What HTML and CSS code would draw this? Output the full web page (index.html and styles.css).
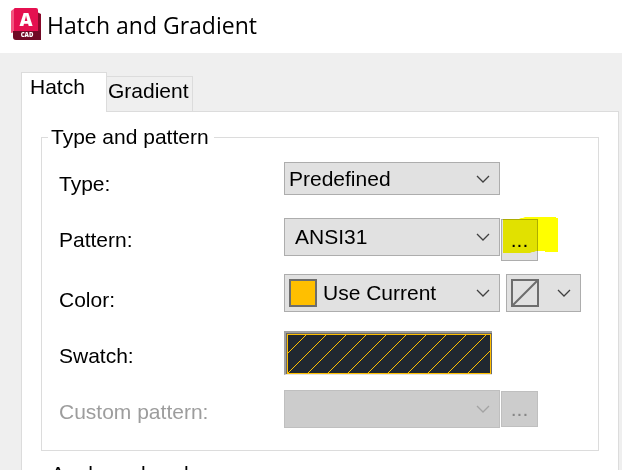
FILE: index.html
```html
<!DOCTYPE html>
<html lang="en">
<head>
    <meta charset="UTF-8" />
    <meta name="viewport" content="width=device-width, initial-scale=1.0" />
    <title>Hatch and Gradient</title>
    <link rel="stylesheet" href="styles.css">
</head>
<body>
    <header class="title-bar">
        <svg class="app-icon" viewBox="0 0 30 33" aria-hidden="true">
            <path fill="#f2557f" d="M0 3 4 0v24l-4 1z" />
            <path fill="#8a0a2c" d="M26 4l4 2v26H6z" />
            <path fill="#e51050" d="M4 0h21q2 0 2 2v21H3V1z" />
            <path fill="#700a26" d="M2 23h25l3-1v10H5q-3 0-3-3z" />
            <text class="icon-letter" x="15" y="18" text-anchor="middle">A</text>
            <text class="icon-name" x="16" y="29" text-anchor="middle">CAD</text>
        </svg>
        <h1>Hatch and Gradient</h1>
    </header>

    <main>
        <div class="tabs" role="tablist">
            <button class="tab active" role="tab" aria-selected="true">Hatch</button>
            <button class="tab" role="tab" aria-selected="false">Gradient</button>
        </div>

        <div class="panel" role="tabpanel">
            <fieldset>
                <legend>Type and pattern</legend>
                <div class="form-grid">
                    <label for="type">Type:</label>
                    <div class="controls">
                        <div class="combo combo-short">
                            <select id="type"><option>Predefined</option></select>
                            <svg class="chevron" viewBox="0 0 14 8" aria-hidden="true"><path d="M1 1l6 6 6-6" /></svg>
                        </div>
                    </div>

                    <label for="pattern">Pattern:</label>
                    <div class="controls">
                        <div class="combo combo-indent">
                            <select id="pattern"><option>ANSI31</option></select>
                            <svg class="chevron" viewBox="0 0 14 8" aria-hidden="true"><path d="M1 1l6 6 6-6" /></svg>
                        </div>
                        <div class="highlighted">
                            <button class="browse browse-tall" aria-label="Browse patterns">...</button>
                            <svg class="marker" viewBox="0 0 55 37" aria-hidden="true">
                                <path fill="#ffff00" d="M0 3h16l2-1h2l2-1h31v1h2v34H42v-1h-9l-2 1h-2l-2 1H0z" />
                            </svg>
                        </div>
                    </div>

                    <label class="label-low" for="color">Color:</label>
                    <div class="controls">
                        <div class="combo combo-color">
                            <span class="chip"></span>
                            <select id="color"><option>Use Current</option></select>
                            <svg class="chevron" viewBox="0 0 14 8" aria-hidden="true"><path d="M1 1l6 6 6-6" /></svg>
                        </div>
                        <div class="combo combo-background">
                            <svg class="no-color" viewBox="0 0 28 28" aria-hidden="true"><path d="M1 1h26v26H1zM1 27 27 1" /></svg>
                            <select aria-label="Background color"><option></option></select>
                            <svg class="chevron" viewBox="0 0 14 8" aria-hidden="true"><path d="M1 1l6 6 6-6" /></svg>
                        </div>
                    </div>

                    <label class="label-low" for="swatch">Swatch:</label>
                    <div class="controls">
                        <button class="swatch" id="swatch">
                            <svg viewBox="0 0 202 38" aria-hidden="true">
                                <path d="M-1 19 19-1M-1 39 39-1M19 39 59-1M39 39 79-1M59 39 99-1M79 39 119-1M99 39 139-1M119 39 159-1M139 39 179-1M159 39 199-1M179 39 219-1" />
                            </svg>
                        </button>
                    </div>

                    <label class="disabled" for="custom">Custom pattern:</label>
                    <div class="controls">
                        <div class="combo">
                            <select id="custom" disabled><option></option></select>
                            <svg class="chevron disabled" viewBox="0 0 14 8" aria-hidden="true"><path d="M1 1l6 6 6-6" /></svg>
                        </div>
                        <button class="browse" aria-label="Browse custom patterns" disabled>...</button>
                    </div>
                </div>
            </fieldset>

            <fieldset>
                <legend>Angle and scale</legend>
            </fieldset>
        </div>
    </main>
</body>
</html>
```
FILE: styles.css
```css
:root {
    --face: #efefef;
    --line: #dcdcdc;
    --control: #e1e1e1;
    --control-border: #adadad;
    --disabled: #cccccc;
    --disabled-border: #bfbfbf;
    --disabled-text: #9d9d9d;
    --accent: #ffbf00;
}

* {
    box-sizing: border-box;
}

body {
    display: flex;
    flex-direction: column;
    height: 100vh;
    margin: 0;
    overflow: hidden;
    background-color: var(--face);
    color: #000;
    font-family: "Liberation Sans", Arial, sans-serif;
    font-size: 21px;
    line-height: 24px;
}

button,
select {
    margin: 0;
    font: inherit;
    color: inherit;
    border: 1px solid var(--control-border);
    border-radius: 0;
    background-color: var(--control);
}

.title-bar {
    display: flex;
    flex-shrink: 0;
    align-items: center;
    gap: 6px;
    height: 53px;
    padding: 0 11px 4px;
    background-color: #fff;
}

.app-icon {
    width: 30px;
    height: 33px;
}

.icon-letter,
.icon-name {
    fill: #fff;
    font-family: "Open Sans", sans-serif;
    font-weight: 800;
}

.icon-letter {
    font-size: 18px;
}

.icon-name {
    font-size: 6px;
}

h1 {
    margin: 0;
    font-family: "Segoe UI", "Open Sans", sans-serif;
    font-size: 23px;
    font-weight: 400;
}

main {
    padding: 19px 3px 0 21px;
}

.tabs {
    display: flex;
    align-items: flex-end;
}

.tab {
    height: 35px;
    padding: 2px 3px 8px 1px;
    border-color: var(--line);
    border-width: 1px 1px 0 0;
    background-color: var(--face);
    text-align: left;
}

.tab.active {
    position: relative;
    width: 86px;
    height: 40px;
    margin-bottom: -1px;
    padding: 2px 8px 13px;
    border-left-width: 1px;
    background-color: #fff;
}

.panel {
    padding: 13px 19px;
    border: 1px solid var(--line);
    background-color: #fff;
}

fieldset {
    min-width: 0;
    margin: 0 0 11px;
    padding: 13px 17px 22px;
    border: 1px solid var(--line);
}

legend {
    margin-left: -11px;
    padding: 0 5px 0 3px;
}

.form-grid {
    display: grid;
    grid-template-columns: 225px 1fr;
    grid-template-rows: 56px 56px 56px 60px 38px;
}

label {
    padding-top: 10px;
}

.label-low {
    padding-top: 14px;
}

label.disabled {
    color: var(--disabled-text);
}

.controls {
    display: flex;
    align-items: flex-start;
    gap: 1px;
}

.combo {
    position: relative;
    width: 216px;
    height: 38px;
}

.combo select {
    width: 100%;
    height: 100%;
    padding: 0 32px 0 4px;
    appearance: none;
    outline: none;
}

.combo-short {
    height: 33px;
}

.combo-indent select {
    padding-left: 10px;
}

.combo-color select {
    padding-left: 38px;
}

.combo-background {
    width: 75px;
    margin-left: 5px;
}

.chevron {
    position: absolute;
    top: 50%;
    right: 10px;
    width: 14px;
    height: 8px;
    margin-top: -4px;
    fill: none;
    stroke: #404040;
    stroke-width: 1.3;
    pointer-events: none;
}

.chevron.disabled {
    stroke: #a3a3a3;
}

.chip,
.no-color {
    position: absolute;
    top: 5px;
    left: 5px;
    width: 28px;
    height: 28px;
    pointer-events: none;
}

.chip {
    border: 2px solid #6d6d6d;
    background-color: var(--accent);
}

.no-color {
    fill: none;
    stroke: #6d6d6d;
    stroke-width: 2;
}

.browse {
    width: 37px;
    height: 36px;
    margin-top: 1px;
    padding: 0;
}

.browse-tall {
    display: block;
    height: 42px;
}

select:disabled,
button:disabled {
    border-color: var(--disabled-border);
    background-color: var(--disabled);
    color: #868686;
    opacity: 1;
}

.highlighted {
    position: relative;
}

.marker {
    position: absolute;
    top: -2px;
    left: 2px;
    width: 55px;
    height: 37px;
    mix-blend-mode: multiply;
    pointer-events: none;
}

.swatch {
    width: 208px;
    height: 44px;
    margin-top: 1px;
    padding: 0;
    border-color: #a0a0a0 #e3e3e3 #e3e3e3 #a0a0a0;
    border-width: 2px 0 1px 2px;
    background-color: #696969;
}

.swatch svg {
    display: block;
    width: 204px;
    height: 40px;
    margin: 1px 0 0 1px;
    border: 1px solid var(--accent);
    background-color: #212830;
    stroke: var(--accent);
    stroke-width: 1;
}
```
